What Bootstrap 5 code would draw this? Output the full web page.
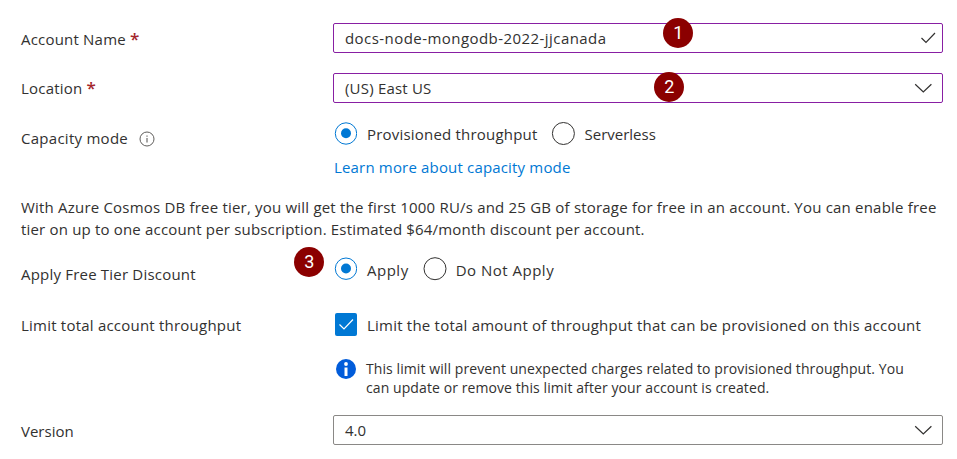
<!DOCTYPE html>
<html lang="en">
<head>
<meta charset="utf-8">
<meta name="viewport" content="width=device-width, initial-scale=1">
<title>Create Azure Cosmos DB Account</title>
<link rel="stylesheet" href="https://cdn.jsdelivr.net/npm/bootstrap@5.3.0/dist/css/bootstrap.min.css">
<style>
  body { font-family: "Open Sans", "Noto Sans", sans-serif; font-size: 15px; line-height: 22px; letter-spacing: .2px; color: #323130; background: #fff; overflow: hidden; }
  .settings { width: 957px; padding: 23px 14px 0 21px; }
  .field-label { width: 312px; flex: none; white-space: nowrap; }
  .field-control { width: 610px; flex: none; }
  .name-label { padding-top: 2px; }
  .required-star { color: #a4262c; font-weight: 600; font-size: 17px; line-height: 1; }
  .input-box { height: 30px; border: 1px solid #8a8886; border-radius: 2px; padding: 0 6px 0 11px; white-space: nowrap; }
  .input-box.edited { border-color: #881fa3; }
  .name-value { letter-spacing: .444px; }
  .tight { letter-spacing: 0; }
  .select-arrow { margin-right: 4px; }
  .gap-row { margin-bottom: 20px; }
  .option-label { margin-left: 10px; white-space: nowrap; padding-top: 2px; }
  .option-label + .radio-mark { margin-left: 14px; }
  .radio-mark + .option-label.second { margin-left: 9px; }
  .radio-mark { flex: none; width: 24px; height: 24px; }
  .capacity { margin-top: -2px; }
  .capacity-label { padding-top: 6px; letter-spacing: .27px; }
  .capacity-label svg { margin-left: 9px; }
  .capacity-link { color: #0078d4; letter-spacing: .17px; margin: 11px 0 0 1px; display: inline-block; }
  .blurb { margin: 18px 0 17px; }
  .blurb span { white-space: nowrap; }
  .blurb span + br + span { letter-spacing: .18px; }
  .wide { letter-spacing: .5px; }
  .tier-label { padding-top: 6px; }
  .limit-row { margin-top: 27px; }
  .limit-label { padding-top: 2px; letter-spacing: .22px; }
  .limit-text { letter-spacing: .22px; }
  .info-note { font-size: 14px; line-height: 19px; letter-spacing: .085px; padding-left: 3px; margin-top: 23px; }
  .info-note svg { flex: none; margin-right: 10px; }
  .version-row { margin-top: 18px; }
  .version-label { padding-top: 2px; }
  .step { width: 30px; height: 30px; border-radius: 50%; background: #8b0000; color: #fff; font-family: Roboto, sans-serif; font-size: 18px; line-height: 29px; text-align: center; letter-spacing: 0; }
  .step-1 { left: 330.4px; top: -4.6px; }
  .step-2 { left: 321.4px; top: -.6px; }
  .step-3 { left: -38.6px; top: -9.6px; }
</style>
</head>
<body>
<main class="settings">
  <div class="d-flex align-items-center gap-row">
    <label class="field-label name-label">Account Name <span class="required-star">*</span></label>
    <div class="field-control position-relative">
      <div class="input-box edited d-flex align-items-center justify-content-between">
        <span class="name-value">docs-node-mongodb-2022-jjcanada</span>
        <svg width="16" height="14" viewBox="0 0 16 14" fill="none" stroke="#323130" stroke-width="1.200"><path d="M1.500 7 6 11.500 15 2"/></svg>
      </div>
      <span class="step step-1 position-absolute">1</span>
    </div>
  </div>

  <div class="d-flex align-items-center gap-row">
    <label class="field-label">Location <span class="required-star">*</span></label>
    <div class="field-control position-relative">
      <div class="input-box edited d-flex align-items-center justify-content-between">
        <span>(US) East US</span>
        <svg class="select-arrow" width="18" height="10" viewBox="0 0 18 10" fill="none" stroke="#323130" stroke-width="1.200"><path d="M1.200 1.200 9.300 9 17.400 1.200"/></svg>
      </div>
      <span class="step step-2 position-absolute">2</span>
    </div>
  </div>

  <div class="d-flex capacity">
    <div class="field-label capacity-label d-flex">Capacity mode
      <svg class="mt-1" width="18" height="16" viewBox="0 0 18 16"><circle cx="10" cy="8" r="7" fill="none" stroke="#605e5c"/><path d="M10 7v4.500M10 4.500v1.200" stroke="#605e5c" stroke-width="1.1"/></svg>
    </div>
    <div class="field-control">
      <div class="d-flex align-items-center">
        <svg class="radio-mark" viewBox="0 0 24 24"><circle cx="13" cy="12.500" r="10.700" fill="none" stroke="#0078d4"/><circle cx="13" cy="12.300" r="5" fill="#0078d4"/></svg>
        <span class="option-label">Provisioned throughput</span>
        <svg class="radio-mark" viewBox="0 0 24 24"><circle cx="12.400" cy="12.500" r="11" fill="none" stroke="#323130"/></svg>
        <span class="option-label second tight">Serverless</span>
      </div>
      <a class="capacity-link text-decoration-none" href="#">Learn more about capacity mode</a>
    </div>
  </div>

  <p class="blurb"><span>With Azure Cosmos DB free tier, you will get the first 1000 RU/s and 25 GB of storage for free in an account. You can enable free</span><br><span>tier on up to one account per subscription. Estimated $64/month discount per account.</span></p>

  <div class="d-flex">
    <div class="field-label tier-label">Apply Free Tier Discount</div>
    <div class="field-control position-relative d-flex align-items-start">
      <svg class="radio-mark" viewBox="0 0 24 24"><circle cx="13" cy="11.700" r="10.700" fill="none" stroke="#0078d4"/><circle cx="13" cy="11.500" r="5" fill="#0078d4"/></svg>
      <span class="option-label wide">Apply</span>
      <svg class="radio-mark" viewBox="0 0 24 24"><circle cx="12" cy="11.700" r="11" fill="none" stroke="#323130"/></svg>
      <span class="option-label second wide">Do Not Apply</span>
      <span class="step step-3 position-absolute">3</span>
    </div>
  </div>

  <div class="d-flex limit-row">
    <div class="field-label limit-label">Limit total account throughput</div>
    <div class="field-control">
      <div class="d-flex align-items-center">
        <svg class="radio-mark" viewBox="0 0 24 24"><rect x="2" y="1" width="22" height="23" rx="2" fill="#0078d4"/><path d="M6.500 12.500 11 17 20 7.500" fill="none" stroke="#fff" stroke-width="1.200"/></svg>
        <span class="option-label limit-text">Limit the total amount of throughput that can be provisioned on this account</span>
      </div>
      <div class="info-note d-flex">
        <svg width="20" height="20" viewBox="0 0 20 20"><circle cx="10" cy="10" r="10" fill="#015cda"/><circle cx="10" cy="5" r="1.900" fill="#fff"/><path d="M8.500 8.500h3V17h-3z" fill="#fff"/></svg>
        <span class="text-nowrap">This limit will prevent unexpected charges related to provisioned throughput. You<br>can update or remove this limit after your account is created.</span>
      </div>
    </div>
  </div>

  <div class="d-flex align-items-center version-row">
    <label class="field-label version-label tight">Version</label>
    <div class="field-control">
      <div class="input-box d-flex align-items-center justify-content-between">
        <span class="tight">4.0</span>
        <svg class="select-arrow" width="18" height="10" viewBox="0 0 18 10" fill="none" stroke="#323130" stroke-width="1.200"><path d="M1.200 1.200 9.300 9 17.400 1.200"/></svg>
      </div>
    </div>
  </div>
</main>
<script src="https://cdn.jsdelivr.net/npm/bootstrap@5.3.0/dist/js/bootstrap.bundle.min.js"></script>
</body>
</html>
